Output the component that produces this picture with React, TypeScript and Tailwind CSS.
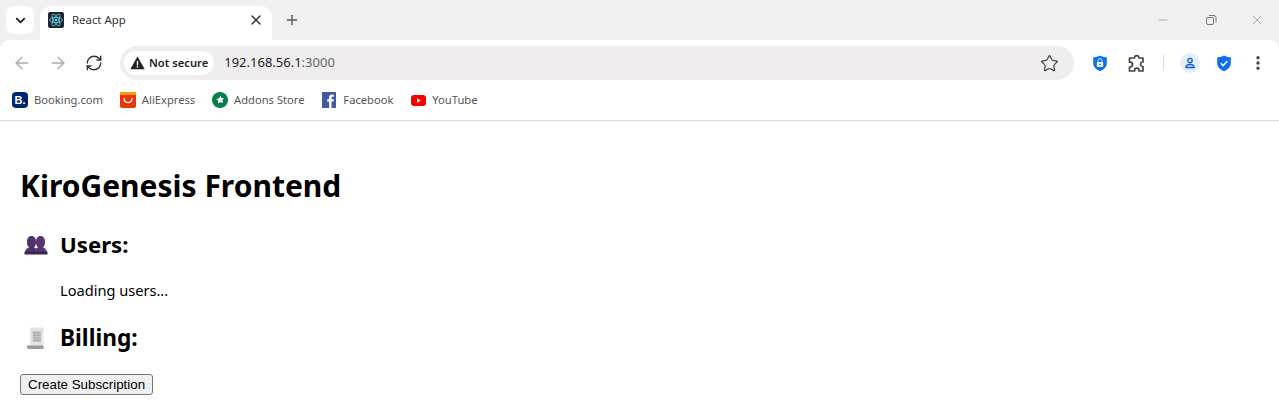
import { ArrowLeft, ArrowRight, RefreshCw, Star, X, Plus, ChevronDown, Minus, EllipsisVertical } from "lucide-react";

function ReactLogo() {
  return (
    <svg width="16" height="16" viewBox="0 0 16 16" className="block">
      <rect width="16" height="16" rx="2" fill="#20232a" />
      <g fill="none" stroke="#61dafb" strokeWidth="0.8">
        <ellipse cx="8" cy="8" rx="6.5" ry="2.6" />
        <ellipse cx="8" cy="8" rx="6.5" ry="2.6" transform="rotate(60 8 8)" />
        <ellipse cx="8" cy="8" rx="6.5" ry="2.6" transform="rotate(120 8 8)" />
      </g>
      <circle cx="8" cy="8" r="1.3" fill="#61dafb" />
    </svg>
  );
}

function BookingIcon() {
  return (
    <div className="w-4 h-4 rounded-sm bg-[#00266e] flex items-center justify-center text-white text-[11px] font-bold leading-none font-['Liberation_Sans',sans-serif]">
      B.
    </div>
  );
}

function AliIcon() {
  return (
    <svg width="16" height="16" viewBox="0 0 16 16" className="block">
      <rect width="16" height="16" rx="2" fill="#ee3300" />
      <path d="M0 3V2a2 2 0 0 1 2-2h12a2 2 0 0 1 2 2v1z" fill="#ff9a00" />
      <path d="M4 6.500c.5 5.500 7.500 5.500 8 0" fill="none" stroke="#fff" strokeWidth="1.400" strokeLinecap="round" />
    </svg>
  );
}

function AddonsIcon() {
  return (
    <svg width="16" height="16" viewBox="0 0 16 16" className="block">
      <circle cx="8" cy="8" r="8" fill="#0a7d4b" />
      <path d="M8.500 3.800l1 2.200 2.500.3-1.600 1.800.6 2.900-2.300-1-2.700 1.500.3-2.800-1.800-1.800 2.700-.6z" fill="#fff" />
    </svg>
  );
}

function FacebookIcon() {
  return (
    <svg width="14" height="16" viewBox="0 0 14 16" className="block">
      <rect width="14" height="16" fill="#3f5b9e" />
      <path d="M9.500 16V9.500h2l.3-2.300H9.500V5.800c0-.7.3-1.100 1.100-1.100h1.200V2.700c-.4 0-1-.1-1.700-.1-1.800 0-3 1-3 3v1.600H5.200v2.300h1.900V16z" fill="#fff" />
    </svg>
  );
}

function YoutubeIcon() {
  return (
    <svg width="15" height="11" viewBox="0 0 15 11" className="block">
      <rect width="15" height="11" rx="3" fill="#f60002" />
      <path d="M6 3.300v4.400l3.600-2.200z" fill="#fff" />
    </svg>
  );
}

function WarningIcon() {
  return (
    <svg width="15" height="14" viewBox="0 0 15 14" className="block">
      <path d="M7.500.5l7.200 12.800H.3z" fill="#222" />
      <rect x="6.800" y="5" width="1.400" height="4.300" fill="#fff" />
      <rect x="6.800" y="10" width="1.400" height="1.500" fill="#fff" />
    </svg>
  );
}

function Shield({ check }: { check?: boolean }) {
  return (
    <svg width="16" height="17" viewBox="0 0 16 17" className="block">
      <path d="M8 0.500c2 1.200 4 1.700 6.800 1.800v6c0 3.800-3 6.300-6.800 8-3.800-1.700-6.800-4.200-6.800-8v-6C4 2.200 6 1.700 8 .5z" fill="#0b6ff0" />
      {check ? (
        <path d="M4.800 8.200l2.300 2.300 4.200-4.300" fill="none" stroke="#fff" strokeWidth="1.600" />
      ) : (
        <g>
          <rect x="4.800" y="7" width="6.400" height="5" rx="1" fill="#fff" opacity="0.9" />
          <path d="M6 7V5.700a2 2 0 0 1 4 0V7" fill="none" stroke="#fff" strokeWidth="1" opacity="0.9" />
          <circle cx="8" cy="9.500" r="0.800" fill="#0b6ff0" />
        </g>
      )}
    </svg>
  );
}

function Puzzle() {
  return (
    <svg width="20" height="20" viewBox="0 0 20 20" fill="none" stroke="#444" strokeWidth="1.700" strokeLinejoin="round" className="block">
      <path d="M7.500 4.500a2.300 2.300 0 0 1 4.500 0v.5h4v4h-.7a2.300 2.300 0 0 0 0 4.500h.7v4.500h-4v-.7a2.200 2.200 0 0 0-4.400 0v.7H2.500v-4h.6a2.400 2.400 0 0 0 0-4.800h-.6V5h5z" />
    </svg>
  );
}

function UsersEmoji() {
  return (
    <svg width="24" height="20" viewBox="0 0 24 20" className="block">
      <path d="M1 19c0-4 1-5.500 4-6.500C3.500 11 3 9.500 3 7c0-3.500 1.500-6 4.500-6S12 3.500 12 7c0 2.500-.5 4-2 5.500 3 1 4 2.500 4 6.500z" fill="#4f3268" />
      <path d="M10 19c0-4 1-5.500 4-6.500-1.500-1.500-2-3-2-5.500 0-3.500 1.500-6 4.500-6S21 3.500 21 7c0 2.500-.5 4-2 5.500 3 1 4 2.500 4 6.500z" fill="#553670" />
      <rect x="0.500" y="16.500" width="23" height="3" rx="0.500" fill="#3b2350" />
    </svg>
  );
}

function ReceiptEmoji() {
  return (
    <svg width="19" height="24" viewBox="0 0 19 24" className="block">
      <path d="M3 1l1.500 1L6 1l1.500 1L9 1l1.500 1L12 1l1.500 1L15 1l1.500 1V20H3z" fill="#e4e4e4" />
      <rect x="5.500" y="5" width="8.500" height="11" fill="#c6c6c6" />
      <path d="M6 7h7.500M6 9.500h7.500M6 12h7.500M6 14.500h7.500" stroke="#9a9a9a" strokeWidth="0.700" />
      <path d="M0 19.500h16.500V23H2a2 2 0 0 1-2-2z" fill="#9a9a9a" />
    </svg>
  );
}

function Bookmark({ icon, label }: { icon: React.ReactNode; label: string }) {
  return (
    <div className="flex items-center gap-[6px]">
      <div className="w-4 flex justify-center">{icon}</div>
      <span className="text-[11.200px] text-[#555]">{label}</span>
    </div>
  );
}

export default function App() {
  return (
    <div className="w-[1279px] h-[410px] overflow-hidden bg-white font-['Noto_Sans','Open_Sans',sans-serif]">
      {/* tab strip */}
      <div className="h-10 bg-[#f0f0f0] flex items-end relative">
        <div className="absolute left-[6px] top-[6px] w-7 h-7 rounded-lg bg-white flex items-center justify-center">
          <ChevronDown size={15} strokeWidth={3} className="text-[#222]" />
        </div>
        <div className="ml-10 w-[232px] h-[34px] bg-white rounded-t-xl flex items-center pl-2 pr-2 pb-[6px]">
          <ReactLogo />
          <span className="ml-2 flex-1 text-[11.400px] text-[#333]">React App</span>
          <X size={16} strokeWidth={2.2} className="text-[#333]" />
        </div>
        <Plus size={16} strokeWidth={2} className="ml-[12px] mb-[12px] text-[#555]" />
        <div className="ml-auto flex items-center mb-[12px] text-[#888]">
          <Minus size={14} strokeWidth={1} className="mr-[35px]" />
          <svg width="12" height="12" viewBox="0 0 12 12" fill="none" stroke="#777" className="mr-[32px]">
            <rect x="1.500" y="3.500" width="7" height="7" rx="1.500" />
            <path d="M4 1.500h5a2 2 0 0 1 2 2v5" />
          </svg>
          <X size={16} strokeWidth={1} className="mr-[14px]" />
        </div>
      </div>

      {/* toolbar */}
      <div className="bg-[#f0f0f0]">
        <div className="h-10 pt-[6px] bg-white rounded-t-[10px] flex items-center">
          <ArrowLeft size={20} strokeWidth={1.6} className="ml-3 text-[#aaa]" />
          <ArrowRight size={20} strokeWidth={1.6} className="ml-4 text-[#aaa]" />
          <RefreshCw size={18} strokeWidth={1.8} className="ml-[17px] text-[#333]" />
          <div className="ml-[17px] w-[954px] h-[34px] rounded-full bg-[#efeded] flex items-center pl-1 pr-[15px]">
            <div className="h-6 px-[6px] rounded-full bg-white flex items-center gap-[4px]">
              <WarningIcon />
              <span className="text-[11.200px] font-semibold text-[#222]">Not secure</span>
            </div>
            <span className="ml-[10px] text-[13px] text-[#222]">
              192.168.56.1<span className="text-[#666]">:3000</span>
            </span>
            <Star size={19} strokeWidth={1.500} className="ml-auto text-[#444]" />
          </div>
          <div className="ml-[18px]"><Shield /></div>
          <div className="ml-[19px]"><Puzzle /></div>
          <div className="ml-[16px] w-px h-4 bg-[#ddd]" />
          <div className="ml-[16px] w-5 h-5 rounded-full bg-[#e3eefc] flex items-center justify-center">
            <svg width="12" height="12" viewBox="0 0 12 12" fill="none" stroke="#0b5bd3" strokeWidth="1.300">
              <circle cx="6" cy="3.500" r="2.200" />
              <path d="M2 10.500c0-2 1.500-3 4-3s4 1 4 3z" />
            </svg>
          </div>
          <div className="ml-[16px]"><Shield check /></div>
          <EllipsisVertical size={18} strokeWidth={2.500} className="ml-[17px] text-[#444]" />
        </div>
      </div>

      {/* bookmarks */}
      <div className="h-[41px] bg-white border-b border-[#d9d9d9] flex items-center pl-3 gap-[16.800px] pt-[1px]">
        <Bookmark icon={<BookingIcon />} label="Booking.com" />
        <Bookmark icon={<AliIcon />} label="AliExpress" />
        <Bookmark icon={<AddonsIcon />} label="Addons Store" />
        <Bookmark icon={<FacebookIcon />} label="Facebook" />
        <Bookmark icon={<YoutubeIcon />} label="YouTube" />
      </div>

      {/* page */}
      <div className="pl-5 pt-[44px] text-black">
        <h1 className="text-[30px] font-bold leading-[41px]">KiroGenesis Frontend</h1>
        <div className="mt-[23px] flex items-center h-8">
          <div className="w-10 pl-1"><UsersEmoji /></div>
          <h2 className="text-[22.200px] font-bold">Users:</h2>
        </div>
        <p className="mt-[19px] pl-10 text-[14.600px] leading-[21px]">Loading users...</p>
        <div className="mt-[21px] flex items-center h-8">
          <div className="w-10 pl-[7px]"><ReceiptEmoji /></div>
          <h2 className="text-[22.700px] font-bold">Billing:</h2>
        </div>
        <button className="mt-[20px] h-[21px] px-[7px] flex items-center bg-[#efefef] border border-[#767676] rounded-[3px] text-[13.333px] text-black font-['Liberation_Sans',sans-serif]">
          Create Subscription
        </button>
      </div>
    </div>
  );
}
